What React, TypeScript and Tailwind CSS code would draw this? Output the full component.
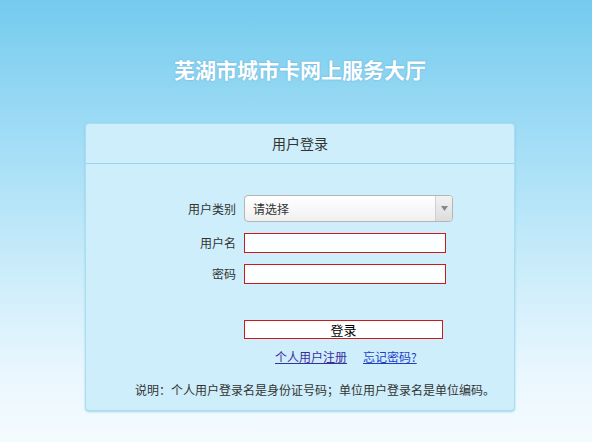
export default function App() {
  const font = { fontFamily: '"Noto Sans CJK SC", "Noto Sans", sans-serif' };
  return (
    <div
      className="h-[442px] w-full bg-[linear-gradient(to_bottom,#74cbee_0%,#9ddbf5_28%,#c9ecfa_60%,#eaf7fe_85%,#f4fbff_100%)] text-[#333]"
      style={font}
    >
      <div className="flex h-[123px] items-center justify-center pt-[17px] pl-[8px]">
        <h1 className="text-[21px] font-bold text-white [text-shadow:0_0_2px_rgba(60,140,190,0.5)]">
          芜湖市城市卡网上服务大厅
        </h1>
      </div>

      <div className="ml-[85px] w-[430px] rounded-[4px] border border-[#a8def0] bg-[#cdeefa] shadow-[0_1px_2px_rgba(90,180,210,0.5)]">
        <div className="flex h-[40px] items-center justify-center border-b border-[#9ad6ea] text-[14px] text-[#333]">
          用户登录
        </div>

        <div className="flex flex-col pt-[31px] pb-[11px] text-[12px]">
          <div className="flex items-center">
            <label className="w-[150px] text-right">用户类别</label>
            <div className="ml-[8px] flex h-[27px] w-[209px] items-stretch overflow-hidden rounded-[4px] border border-[#b5b5b5] bg-[linear-gradient(to_bottom,#ffffff,#f0f0f0)]">
              <span className="flex flex-1 items-center pl-[8px] text-[12px] text-[#333]">请选择</span>
              <span className="flex w-[17px] items-center justify-center border-l border-[#d0d0d0] bg-[linear-gradient(to_bottom,#f2f2f2,#dcdcdc)]">
                <svg width="7" height="5" viewBox="0 0 7 5">
                  <path d="M0 0H7L3.5 5Z" fill="#888" />
                </svg>
              </span>
            </div>
          </div>

          <div className="mt-[11px] flex items-center">
            <label className="w-[150px] text-right">用户名</label>
            <input className="ml-[8px] h-[20px] w-[202px] border border-[#cc1a1a] bg-[#fbffff] outline-none" />
          </div>

          <div className="mt-[11px] flex items-center">
            <label className="w-[150px] text-right">密码</label>
            <input type="password" className="ml-[8px] h-[20px] w-[202px] border border-[#cc1a1a] bg-[#fbffff] outline-none" />
          </div>

          <div className="mt-[36px] flex">
            <button className="ml-[158px] flex h-[19px] w-[199px] items-center justify-center border border-[#cc1a1a] bg-white text-[13px] text-black">
              登录
            </button>
          </div>

          <div className="mt-[9px] flex text-[12px]">
            <a href="#" className="ml-[189px] text-[#3b2d9c] underline">个人用户注册</a>
            <a href="#" className="ml-[16px] text-[#1f3fc8] underline">忘记密码?</a>
          </div>

          <p className="mt-[15px] pl-[49px] text-[12px] text-[#333]">
            说明：个人用户登录名是身份证号码；单位用户登录名是单位编码。
          </p>
        </div>
      </div>
    </div>
  );
}
